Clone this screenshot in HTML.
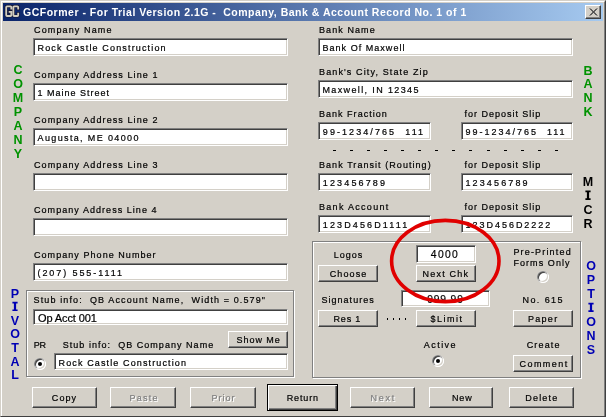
<!DOCTYPE html><html><head><meta charset='utf-8'><style>
*{margin:0;padding:0;box-sizing:border-box}
html,body{width:606px;height:417px;overflow:hidden;background:#D4D0C8}
body{position:relative;font-family:"Liberation Sans",sans-serif}
.win{position:absolute;left:0;top:0;width:606px;height:417px;background:#D4D0C8;
 border-top:1px solid #D4D0C8;border-left:1px solid #D4D0C8;border-right:1px solid #404040;border-bottom:1px solid #404040}
.win2{position:absolute;left:1px;top:1px;width:604px;height:415px;border-top:1px solid #fff;border-left:1px solid #fff;border-right:1px solid #808080;border-bottom:0}
.title{position:absolute;left:3px;top:3px;width:600px;height:18px;background:linear-gradient(to right,#0A246A,#A6CAF0)}
.close{position:absolute;left:585px;top:5px;width:16px;height:14px;background:#D4D0C8;
 border-top:1px solid #fff;border-left:1px solid #fff;border-right:1px solid #404040;border-bottom:1px solid #404040;box-shadow:inset -1px -1px 0 #808080}
.inp{position:absolute;background:#fff;border-top:1px solid #808080;border-left:1px solid #808080;border-right:1px solid #fff;border-bottom:1px solid #fff;box-shadow:inset 1px 1px 0 #404040,inset -1px -1px 0 #D4D0C8}
.btn{position:absolute;background:#D4D0C8;border-top:1px solid #fff;border-left:1px solid #fff;border-right:1px solid #404040;border-bottom:1px solid #404040;box-shadow:inset -1px -1px 0 #808080}
.btn.def{border:1px solid #000;box-shadow:inset 1px 1px 0 #fff,inset -1px -1px 0 #404040,inset -2px -2px 0 #808080}
.grp{position:absolute;border:1px solid #808080;box-shadow:inset 1px 1px 0 #fff,1px 1px 0 #fff}
.rad{position:absolute;width:12px;height:12px;border-radius:50%;background:#fff;
 box-shadow:inset 1px 1px 0 #808080, inset -1px -1px 0 #fff}
.rad:before{content:"";position:absolute;left:1px;top:1px;width:10px;height:10px;border-radius:50%;box-shadow:inset 1px 1px 0 #404040,inset -1px -1px 0 #D4D0C8}
.rad i{position:absolute;left:4px;top:4px;width:4px;height:4px;border-radius:50%;background:#000}
.dash{position:absolute;width:3px;height:1px;background:#000}
svg text{font-family:"Liberation Sans",sans-serif;white-space:pre}
</style></head><body><div class="win"></div><div class="win2"></div>
<div class="title"></div>
<svg style="position:absolute;left:0;top:0" width="24" height="22"><g fill="none" stroke-linecap="square"><path d="M11.3 8.6 V7.2 Q11.3 6.4 10.5 6.4 H7 Q6.2 6.4 6.2 7.2 V15.2 Q6.2 16 7 16 H10.5 Q11.3 16 11.3 15.2 V11.8 H9.6 M13.4 7.2 Q13.4 6.4 14.2 6.4 H17.4 Q18.2 6.4 18.2 7.2 V8.6 M13.4 7.2 V15.2 Q13.4 16 14.2 16 H17.4 Q18.2 16 18.2 15.2 V13.6" stroke="#161630" stroke-width="3.2"/><path d="M11.3 8.6 V7.2 Q11.3 6.4 10.5 6.4 H7 Q6.2 6.4 6.2 7.2 V15.2 Q6.2 16 7 16 H10.5 Q11.3 16 11.3 15.2 V11.8 H9.6 M13.4 7.2 Q13.4 6.4 14.2 6.4 H17.4 Q18.2 6.4 18.2 7.2 V8.6 M13.4 7.2 V15.2 Q13.4 16 14.2 16 H17.4 Q18.2 16 18.2 15.2 V13.6" stroke="#D2CEC0" stroke-width="1.8"/></g></svg>
<div class="close"><svg width="14" height="12" style="position:absolute;left:0;top:0"><path d="M3.5 2.5 L10.5 9.5 M4.5 2.5 L11.5 9.5 M10.5 2.5 L3.5 9.5 M11.5 2.5 L4.5 9.5" stroke="#4a4a4a" stroke-width="0.85" fill="none"/></svg></div>
<div class="inp" style="left:33px;top:38px;width:255px;height:18px"></div>
<div class="inp" style="left:33px;top:83px;width:255px;height:18px"></div>
<div class="inp" style="left:33px;top:128px;width:255px;height:18px"></div>
<div class="inp" style="left:33px;top:173px;width:255px;height:18px"></div>
<div class="inp" style="left:33px;top:218px;width:255px;height:18px"></div>
<div class="inp" style="left:33px;top:263px;width:255px;height:18px"></div>
<div class="inp" style="left:318px;top:38px;width:255px;height:18px"></div>
<div class="inp" style="left:318px;top:80px;width:255px;height:18px"></div>
<div class="inp" style="left:318px;top:122px;width:113px;height:18px"></div>
<div class="inp" style="left:461px;top:122px;width:112px;height:18px"></div>
<div class="dash" style="left:333.0px;top:150px"></div>
<div class="dash" style="left:350.1px;top:150px"></div>
<div class="dash" style="left:367.1px;top:150px"></div>
<div class="dash" style="left:384.1px;top:150px"></div>
<div class="dash" style="left:401.2px;top:150px"></div>
<div class="dash" style="left:418.2px;top:150px"></div>
<div class="dash" style="left:435.3px;top:150px"></div>
<div class="dash" style="left:452.4px;top:150px"></div>
<div class="dash" style="left:469.4px;top:150px"></div>
<div class="dash" style="left:486.5px;top:150px"></div>
<div class="dash" style="left:503.5px;top:150px"></div>
<div class="dash" style="left:520.5px;top:150px"></div>
<div class="dash" style="left:537.6px;top:150px"></div>
<div class="dash" style="left:554.6px;top:150px"></div>
<div class="inp" style="left:318px;top:173px;width:113px;height:18px"></div>
<div class="inp" style="left:461px;top:173px;width:112px;height:18px"></div>
<div class="inp" style="left:318px;top:215px;width:113px;height:18px"></div>
<div class="inp" style="left:461px;top:215px;width:112px;height:18px"></div>
<svg style="position:absolute;left:0;top:0" width="606" height="417"><path d="M585.40 190.60 h5.2 v1.7 h-1.5 v5.9 h1.5 v1.7 h-5.2 v-1.7 h1.5 v-5.9 h-1.5 z" fill="#000"/></svg>
<svg style="position:absolute;left:0;top:0" width="606" height="417"><path d="M12.40 301.80 h5.2 v1.7 h-1.5 v5.9 h1.5 v1.7 h-5.2 v-1.7 h1.5 v-5.9 h-1.5 z" fill="#0000B4"/></svg>
<svg style="position:absolute;left:0;top:0" width="606" height="417"><path d="M588.40 302.70 h5.2 v1.7 h-1.5 v5.9 h1.5 v1.7 h-5.2 v-1.7 h1.5 v-5.9 h-1.5 z" fill="#0000B4"/></svg>
<div class="grp" style="left:26px;top:290px;width:268px;height:87px"></div>
<div class="inp" style="left:33px;top:309px;width:255px;height:16px"></div>
<div class="btn" style="left:228px;top:331px;width:60px;height:17px"></div>
<div class="rad" style="left:34px;top:358px"><i></i></div>
<div class="inp" style="left:54px;top:353px;width:234px;height:17px"></div>
<div class="grp" style="left:312px;top:241px;width:269px;height:137px"></div>
<div class="btn" style="left:318px;top:265px;width:60px;height:17px"></div>
<div class="inp" style="left:416px;top:245px;width:60px;height:18px"></div>
<div class="btn" style="left:416px;top:265px;width:60px;height:17px"></div>
<div class="rad" style="left:537px;top:271px"></div>
<div class="inp" style="left:401px;top:290px;width:89px;height:17px"></div>
<div class="btn" style="left:318px;top:310px;width:60px;height:17px"></div>
<div class="dash" style="left:387px;top:318px;width:1.3px;height:2px"></div>
<div class="dash" style="left:393px;top:318px;width:1.3px;height:2px"></div>
<div class="dash" style="left:399px;top:318px;width:1.3px;height:2px"></div>
<div class="dash" style="left:405px;top:318px;width:1.3px;height:2px"></div>
<div class="btn" style="left:416px;top:310px;width:60px;height:17px"></div>
<div class="btn" style="left:513px;top:310px;width:60px;height:17px"></div>
<div class="rad" style="left:432px;top:355px"><i></i></div>
<div class="btn" style="left:513px;top:355px;width:60px;height:17px"></div>
<div class="btn" style="left:32px;top:387px;width:65px;height:21px"></div>
<div class="btn" style="left:110px;top:387px;width:66px;height:21px"></div>
<div class="btn" style="left:190px;top:387px;width:66px;height:21px"></div>
<div class="btn def" style="left:267px;top:384px;width:71px;height:27px"></div>
<div class="btn" style="left:350px;top:387px;width:65px;height:21px"></div>
<div class="btn" style="left:429px;top:387px;width:64px;height:21px"></div>
<div class="btn" style="left:509px;top:387px;width:65px;height:21px"></div>
<svg style="position:absolute;left:0;top:0;will-change:transform" width="606" height="417">
<text transform="translate(23.00 16) scale(1 1)" fill="#fff" letter-spacing="0.506" style="font-size:10.5px;font-weight:bold">GCFormer - For Trial Version 2.1G -  Company, Bank &amp; Account Record No. 1 of 1</text>
<text transform="translate(34.00 33) scale(0.95 1)" fill="#000" stroke="#000" stroke-width="0.22" letter-spacing="1.182" style="font-size:9.5px;font-weight:normal">Company Name</text>
<text transform="translate(37.50 51) scale(0.95 1)" fill="#000" stroke="#000" stroke-width="0.22" letter-spacing="1.209" style="font-size:9.5px;font-weight:normal">Rock Castle Construction</text>
<text transform="translate(34.00 78) scale(0.95 1)" fill="#000" stroke="#000" stroke-width="0.22" letter-spacing="1.143" style="font-size:9.5px;font-weight:normal">Company Address Line 1</text>
<text transform="translate(37.50 96) scale(0.95 1)" fill="#000" stroke="#000" stroke-width="0.22" letter-spacing="1.046" style="font-size:9.5px;font-weight:normal">1 Maine Street</text>
<text transform="translate(34.00 123) scale(0.95 1)" fill="#000" stroke="#000" stroke-width="0.22" letter-spacing="1.143" style="font-size:9.5px;font-weight:normal">Company Address Line 2</text>
<text transform="translate(37.50 141) scale(0.95 1)" fill="#000" stroke="#000" stroke-width="0.22" letter-spacing="1.438" style="font-size:9.5px;font-weight:normal">Augusta, ME 04000</text>
<text transform="translate(34.00 168) scale(0.95 1)" fill="#000" stroke="#000" stroke-width="0.22" letter-spacing="1.143" style="font-size:9.5px;font-weight:normal">Company Address Line 3</text>
<text transform="translate(34.00 213) scale(0.95 1)" fill="#000" stroke="#000" stroke-width="0.22" letter-spacing="1.095" style="font-size:9.5px;font-weight:normal">Company Address Line 4</text>
<text transform="translate(34.00 258) scale(0.95 1)" fill="#000" stroke="#000" stroke-width="0.22" letter-spacing="1.105" style="font-size:9.5px;font-weight:normal">Company Phone Number</text>
<text transform="translate(37.50 276) scale(0.95 1)" fill="#000" stroke="#000" stroke-width="0.22" letter-spacing="2.008" style="font-size:9.5px;font-weight:normal">(207) 555-1111</text>
<text transform="translate(319.00 33) scale(0.95 1)" fill="#000" stroke="#000" stroke-width="0.22" letter-spacing="1.138" style="font-size:9.5px;font-weight:normal">Bank Name</text>
<text transform="translate(322.50 51) scale(0.95 1)" fill="#000" stroke="#000" stroke-width="0.22" letter-spacing="1.079" style="font-size:9.5px;font-weight:normal">Bank Of Maxwell</text>
<text transform="translate(319.00 75) scale(0.95 1)" fill="#000" stroke="#000" stroke-width="0.22" letter-spacing="1.176" style="font-size:9.5px;font-weight:normal">Bank&#x27;s City, State Zip</text>
<text transform="translate(322.50 93) scale(0.95 1)" fill="#000" stroke="#000" stroke-width="0.22" letter-spacing="1.438" style="font-size:9.5px;font-weight:normal">Maxwell, IN 12345</text>
<text transform="translate(319.00 117) scale(0.95 1)" fill="#000" stroke="#000" stroke-width="0.22" letter-spacing="1.067" style="font-size:9.5px;font-weight:normal">Bank Fraction</text>
<text transform="translate(322.80 135) scale(0.95 1)" fill="#000" stroke="#000" stroke-width="0.22" letter-spacing="2.173" style="font-size:9.5px;font-weight:normal">99-1234/765  111</text>
<text transform="translate(464.50 117) scale(0.95 1)" fill="#000" stroke="#000" stroke-width="0.22" letter-spacing="1.033" style="font-size:9.5px;font-weight:normal">for Deposit Slip</text>
<text transform="translate(465.40 135) scale(0.95 1)" fill="#000" stroke="#000" stroke-width="0.22" letter-spacing="2.1" style="font-size:9.5px;font-weight:normal">99-1234/765  111</text>
<text transform="translate(319.00 168) scale(0.95 1)" fill="#000" stroke="#000" stroke-width="0.22" letter-spacing="1.105" style="font-size:9.5px;font-weight:normal">Bank Transit (Routing)</text>
<text transform="translate(322.80 186) scale(0.95 1)" fill="#000" stroke="#000" stroke-width="0.22" letter-spacing="2.25" style="font-size:9.5px;font-weight:normal">123456789</text>
<text transform="translate(464.50 168) scale(0.95 1)" fill="#000" stroke="#000" stroke-width="0.22" letter-spacing="1.033" style="font-size:9.5px;font-weight:normal">for Deposit Slip</text>
<text transform="translate(465.40 186) scale(0.95 1)" fill="#000" stroke="#000" stroke-width="0.22" letter-spacing="2.25" style="font-size:9.5px;font-weight:normal">123456789</text>
<text transform="translate(319.00 210) scale(0.95 1)" fill="#000" stroke="#000" stroke-width="0.22" letter-spacing="1.355" style="font-size:9.5px;font-weight:normal">Bank Account</text>
<text transform="translate(322.80 228) scale(0.95 1)" fill="#000" stroke="#000" stroke-width="0.22" letter-spacing="2.236" style="font-size:9.5px;font-weight:normal">123D456D1111</text>
<text transform="translate(464.50 210) scale(0.95 1)" fill="#000" stroke="#000" stroke-width="0.22" letter-spacing="1.033" style="font-size:9.5px;font-weight:normal">for Deposit Slip</text>
<text transform="translate(465.40 228) scale(0.95 1)" fill="#000" stroke="#000" stroke-width="0.22" letter-spacing="2.091" style="font-size:9.5px;font-weight:normal">123D456D2222</text>
<text transform="translate(18.00 74) scale(1 1)" fill="#009200" letter-spacing="0" style="font-size:12.5px;font-weight:bold" text-anchor="middle">C</text>
<text transform="translate(18.00 88) scale(1 1)" fill="#009200" letter-spacing="0" style="font-size:12.5px;font-weight:bold" text-anchor="middle">O</text>
<text transform="translate(18.00 102) scale(1 1)" fill="#009200" letter-spacing="0" style="font-size:12.5px;font-weight:bold" text-anchor="middle">M</text>
<text transform="translate(18.00 116) scale(1 1)" fill="#009200" letter-spacing="0" style="font-size:12.5px;font-weight:bold" text-anchor="middle">P</text>
<text transform="translate(18.00 130) scale(1 1)" fill="#009200" letter-spacing="0" style="font-size:12.5px;font-weight:bold" text-anchor="middle">A</text>
<text transform="translate(18.00 144) scale(1 1)" fill="#009200" letter-spacing="0" style="font-size:12.5px;font-weight:bold" text-anchor="middle">N</text>
<text transform="translate(18.00 158) scale(1 1)" fill="#009200" letter-spacing="0" style="font-size:12.5px;font-weight:bold" text-anchor="middle">Y</text>
<text transform="translate(588.00 74.5) scale(1 1)" fill="#009200" letter-spacing="0" style="font-size:12.5px;font-weight:bold" text-anchor="middle">B</text>
<text transform="translate(588.00 88.3) scale(1 1)" fill="#009200" letter-spacing="0" style="font-size:12.5px;font-weight:bold" text-anchor="middle">A</text>
<text transform="translate(588.00 102.1) scale(1 1)" fill="#009200" letter-spacing="0" style="font-size:12.5px;font-weight:bold" text-anchor="middle">N</text>
<text transform="translate(588.00 115.9) scale(1 1)" fill="#009200" letter-spacing="0" style="font-size:12.5px;font-weight:bold" text-anchor="middle">K</text>
<text transform="translate(588.00 186.0) scale(1 1)" fill="#000" letter-spacing="0" style="font-size:12.5px;font-weight:bold" text-anchor="middle">M</text>
<text transform="translate(588.00 213.8) scale(1 1)" fill="#000" letter-spacing="0" style="font-size:12.5px;font-weight:bold" text-anchor="middle">C</text>
<text transform="translate(588.00 227.7) scale(1 1)" fill="#000" letter-spacing="0" style="font-size:12.5px;font-weight:bold" text-anchor="middle">R</text>
<text transform="translate(15.00 297.5) scale(1 1)" fill="#0000B4" letter-spacing="0" style="font-size:12.5px;font-weight:bold" text-anchor="middle">P</text>
<text transform="translate(15.00 324.7) scale(1 1)" fill="#0000B4" letter-spacing="0" style="font-size:12.5px;font-weight:bold" text-anchor="middle">V</text>
<text transform="translate(15.00 338.3) scale(1 1)" fill="#0000B4" letter-spacing="0" style="font-size:12.5px;font-weight:bold" text-anchor="middle">O</text>
<text transform="translate(15.00 351.9) scale(1 1)" fill="#0000B4" letter-spacing="0" style="font-size:12.5px;font-weight:bold" text-anchor="middle">T</text>
<text transform="translate(15.00 365.5) scale(1 1)" fill="#0000B4" letter-spacing="0" style="font-size:12.5px;font-weight:bold" text-anchor="middle">A</text>
<text transform="translate(15.00 379.1) scale(1 1)" fill="#0000B4" letter-spacing="0" style="font-size:12.5px;font-weight:bold" text-anchor="middle">L</text>
<text transform="translate(591.00 270) scale(1 1)" fill="#0000B4" letter-spacing="0" style="font-size:12.5px;font-weight:bold" text-anchor="middle">O</text>
<text transform="translate(591.00 284) scale(1 1)" fill="#0000B4" letter-spacing="0" style="font-size:12.5px;font-weight:bold" text-anchor="middle">P</text>
<text transform="translate(591.00 298) scale(1 1)" fill="#0000B4" letter-spacing="0" style="font-size:12.5px;font-weight:bold" text-anchor="middle">T</text>
<text transform="translate(591.00 326) scale(1 1)" fill="#0000B4" letter-spacing="0" style="font-size:12.5px;font-weight:bold" text-anchor="middle">O</text>
<text transform="translate(591.00 340) scale(1 1)" fill="#0000B4" letter-spacing="0" style="font-size:12.5px;font-weight:bold" text-anchor="middle">N</text>
<text transform="translate(591.00 354) scale(1 1)" fill="#0000B4" letter-spacing="0" style="font-size:12.5px;font-weight:bold" text-anchor="middle">S</text>
<text transform="translate(33.60 303) scale(0.95 1)" fill="#000" stroke="#000" stroke-width="0.22" letter-spacing="1.167" style="font-size:9.5px;font-weight:normal">Stub info:  QB Account Name,  Width = 0.579&quot;</text>
<text transform="translate(38.00 322) scale(1 1)" fill="#000" stroke="#000" stroke-width="0.22" letter-spacing="-0.1" style="font-size:11px;font-weight:normal">Op Acct 001</text>
<text transform="translate(33.70 348) scale(0.95 1)" fill="#000" stroke="#000" stroke-width="0.22" letter-spacing="-0.1" style="font-size:9.5px;font-weight:normal">PR</text>
<text transform="translate(62.70 348) scale(0.95 1)" fill="#000" stroke="#000" stroke-width="0.22" letter-spacing="1.085" style="font-size:9.5px;font-weight:normal">Stub info:  QB Company Name</text>
<text transform="translate(236.60 343) scale(0.95 1)" fill="#000" stroke="#000" stroke-width="0.22" letter-spacing="0.967" style="font-size:9.5px;font-weight:normal">Show Me</text>
<text transform="translate(58.50 366) scale(0.95 1)" fill="#000" stroke="#000" stroke-width="0.22" letter-spacing="1.183" style="font-size:9.5px;font-weight:normal">Rock Castle Construction</text>
<text transform="translate(333.70 258) scale(0.95 1)" fill="#000" stroke="#000" stroke-width="0.22" letter-spacing="1.025" style="font-size:9.5px;font-weight:normal">Logos</text>
<text transform="translate(329.70 277) scale(0.95 1)" fill="#000" stroke="#000" stroke-width="0.22" letter-spacing="1.16" style="font-size:9.5px;font-weight:normal">Choose</text>
<text transform="translate(430.80 258) scale(0.9 1)" fill="#000" stroke="#000" stroke-width="0.22" letter-spacing="1.5" style="font-size:11.5px;font-weight:normal">4000</text>
<text transform="translate(422.60 277) scale(0.95 1)" fill="#000" stroke="#000" stroke-width="0.22" letter-spacing="1.257" style="font-size:9.5px;font-weight:normal">Next Chk</text>
<text transform="translate(513.40 255) scale(0.95 1)" fill="#000" stroke="#000" stroke-width="0.22" letter-spacing="1.23" style="font-size:9.5px;font-weight:normal">Pre-Printed</text>
<text transform="translate(513.40 266) scale(0.95 1)" fill="#000" stroke="#000" stroke-width="0.22" letter-spacing="1.122" style="font-size:9.5px;font-weight:normal">Forms Only</text>
<text transform="translate(321.40 303) scale(0.95 1)" fill="#000" stroke="#000" stroke-width="0.22" letter-spacing="1.089" style="font-size:9.5px;font-weight:normal">Signatures</text>
<text transform="translate(427.20 302.5) scale(0.9 1)" fill="#000" stroke="#000" stroke-width="0.22" letter-spacing="0.9" style="font-size:11.5px;font-weight:normal">999.99</text>
<text transform="translate(522.60 303) scale(0.95 1)" fill="#000" stroke="#000" stroke-width="0.22" letter-spacing="1.45" style="font-size:9.5px;font-weight:normal">No. 615</text>
<text transform="translate(333.40 322) scale(0.95 1)" fill="#000" stroke="#000" stroke-width="0.22" letter-spacing="0.9" style="font-size:9.5px;font-weight:normal">Res 1</text>
<text transform="translate(430.40 322) scale(0.95 1)" fill="#000" stroke="#000" stroke-width="0.22" letter-spacing="1.6" style="font-size:9.5px;font-weight:normal">$Limit</text>
<text transform="translate(527.90 322) scale(0.95 1)" fill="#000" stroke="#000" stroke-width="0.22" letter-spacing="1.375" style="font-size:9.5px;font-weight:normal">Paper</text>
<text transform="translate(423.80 348) scale(0.95 1)" fill="#000" stroke="#000" stroke-width="0.22" letter-spacing="1.52" style="font-size:9.5px;font-weight:normal">Active</text>
<text transform="translate(526.70 348) scale(0.95 1)" fill="#000" stroke="#000" stroke-width="0.22" letter-spacing="1.22" style="font-size:9.5px;font-weight:normal">Create</text>
<text transform="translate(519.50 367) scale(0.95 1)" fill="#000" stroke="#000" stroke-width="0.22" letter-spacing="1.517" style="font-size:9.5px;font-weight:normal">Comment</text>
<text transform="translate(51.80 401) scale(0.95 1)" fill="#000" stroke="#000" stroke-width="0.22" letter-spacing="1.133" style="font-size:9.5px;font-weight:normal">Copy</text>
<text transform="translate(130.60 402) scale(0.95 1)" fill="#fff" stroke="#fff" stroke-width="0.22" letter-spacing="1.25" style="font-size:9.5px;font-weight:normal">Paste</text>
<text transform="translate(129.60 401) scale(0.95 1)" fill="#808080" stroke="#808080" stroke-width="0.22" letter-spacing="1.25" style="font-size:9.5px;font-weight:normal">Paste</text>
<text transform="translate(212.40 402) scale(0.95 1)" fill="#fff" stroke="#fff" stroke-width="0.22" letter-spacing="1.1" style="font-size:9.5px;font-weight:normal">Prior</text>
<text transform="translate(211.40 401) scale(0.95 1)" fill="#808080" stroke="#808080" stroke-width="0.22" letter-spacing="1.1" style="font-size:9.5px;font-weight:normal">Prior</text>
<text transform="translate(286.70 401) scale(0.95 1)" fill="#000" stroke="#000" stroke-width="0.22" letter-spacing="0.9" style="font-size:9.5px;font-weight:normal">Return</text>
<text transform="translate(371.50 402) scale(0.95 1)" fill="#fff" stroke="#fff" stroke-width="0.22" letter-spacing="1.867" style="font-size:9.5px;font-weight:normal">Next</text>
<text transform="translate(370.50 401) scale(0.95 1)" fill="#808080" stroke="#808080" stroke-width="0.22" letter-spacing="1.867" style="font-size:9.5px;font-weight:normal">Next</text>
<text transform="translate(452.00 401) scale(0.95 1)" fill="#000" stroke="#000" stroke-width="0.22" letter-spacing="0.85" style="font-size:9.5px;font-weight:normal">New</text>
<text transform="translate(525.30 401) scale(0.95 1)" fill="#000" stroke="#000" stroke-width="0.22" letter-spacing="1.22" style="font-size:9.5px;font-weight:normal">Delete</text>
</svg>
<svg style="position:absolute;left:0;top:0" width="606" height="417"><ellipse cx="445.3" cy="261" rx="53.7" ry="40.6" fill="none" stroke="#E00000" stroke-width="3.6"/></svg></body></html>
